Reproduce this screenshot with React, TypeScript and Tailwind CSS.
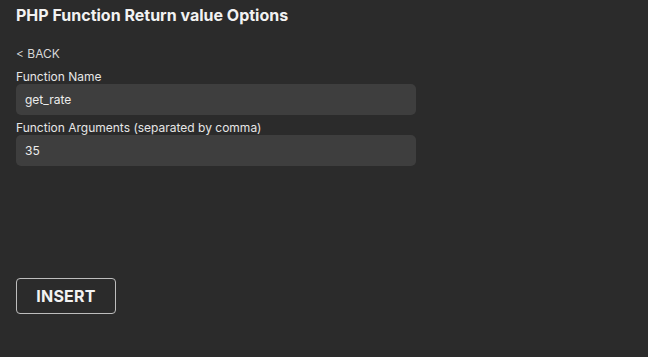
export default function App() {
    return (
        <div className="w-[648px] h-[357px] bg-[#2b2b2b] text-white px-4 pt-[3px]" style={{ fontFamily: 'Inter, "Noto Sans", sans-serif' }}>
            <h1 className="text-[16px] leading-6 font-bold text-[#f2f2f2]">
                PHP Function Return value Options
            </h1>
            <button className="mt-[19px] text-[12px] leading-4 text-[#d8d8d8] block">
                &lt; BACK
            </button>
            <div className="mt-[6px] w-[400px]">
                <label className="block pt-[2px] text-[12px] leading-[14px] text-[#e6e6e6]">Function Name</label>
                <input
                    defaultValue="get_rate"
                    className="w-full h-[31px] rounded-[5px] bg-[#3e3e3e] px-[9px] text-[12px] text-[#ececec] outline-none"
                />
                <label className="block mt-[4px] pt-[2px] text-[12px] leading-[14px] text-[#e6e6e6]">Function Arguments (separated by comma)</label>
                <input
                    defaultValue="35"
                    className="w-full h-[31px] rounded-[5px] bg-[#3e3e3e] px-[9px] text-[12px] text-[#ececec] outline-none"
                />
            </div>
            <button className="mt-[112px] w-[100px] h-[36px] rounded-[4px] border border-[#bdbdbd] text-[16px] font-bold text-[#f2f2f2] tracking-[0.2px]">
                INSERT
            </button>
        </div>
    )
}
